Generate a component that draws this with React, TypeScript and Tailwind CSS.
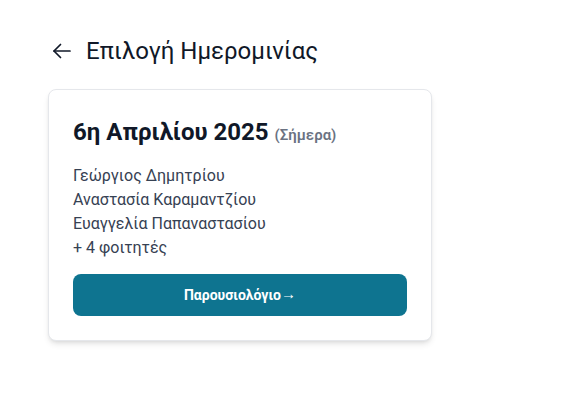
import React from 'react';

const students = ['Γεώργιος Δημητρίου', 'Αναστασία Καραμαντζίου', 'Ευαγγελία Παπαναστασίου'];

export default function App() {
  return (
    <div className="min-h-screen bg-white px-12 pt-[35px] font-['Roboto',sans-serif]">
      <div className="flex items-center gap-3.5 h-8">
        <button className="text-gray-900 ml-1">
          <svg width="20" height="20" viewBox="0 0 20 20" fill="none" stroke="currentColor" strokeWidth="1.7" strokeLinecap="round" strokeLinejoin="round">
            <path d="M18 10H2" />
            <path d="M8.5 16.5L2 10l6.5-6.5" />
          </svg>
        </button>
        <h1 className="text-2xl text-gray-900">Επιλογή Ημερομινίας</h1>
      </div>

      <div className="mt-[22px] w-96 rounded-lg border border-gray-200 bg-white px-6 pt-[26px] pb-6 shadow-md">
        <h2 className="flex items-baseline gap-1.5 text-gray-900">
          <span className="text-2xl font-bold">6η Απριλίου 2025</span>
          <span className="text-[15px] font-semibold text-gray-500">(Σήμερα)</span>
        </h2>
        <div className="mt-4 text-base leading-6 text-gray-700">
          {students.map((s) => (
            <p key={s}>{s}</p>
          ))}
          <p>+ 4 φοιτητές</p>
        </div>
        <button className="mt-3.5 flex h-[42px] w-full items-center justify-center rounded-lg bg-[#0e7490] text-sm font-bold text-white">
          Παρουσιολόγιο<span className="text-[15px] font-normal leading-none -mt-0.5">→</span>
        </button>
      </div>
    </div>
  );
}
